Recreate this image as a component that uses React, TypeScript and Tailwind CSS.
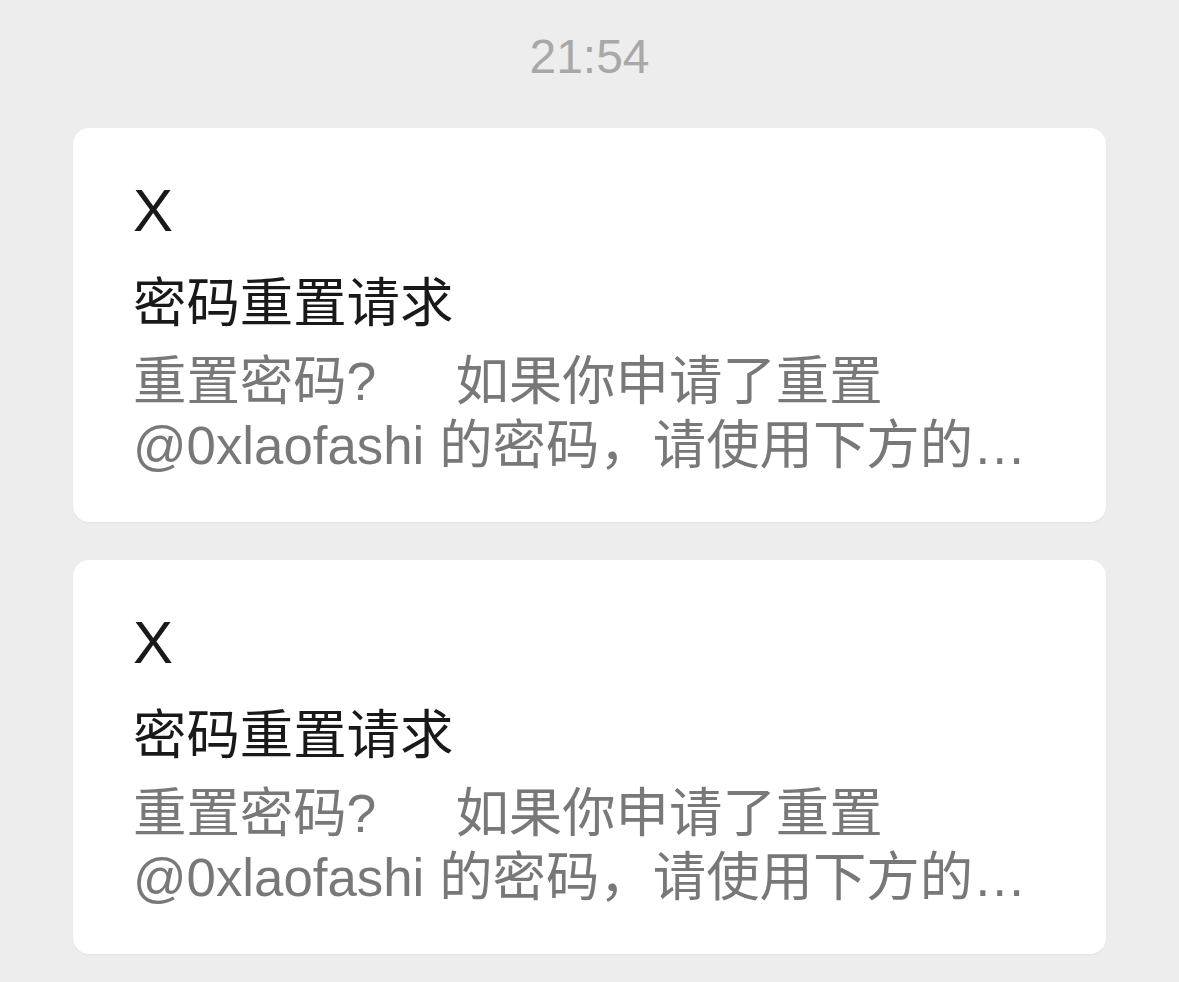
function MessageCard() {
  return (
    <div className="h-[394px] rounded-[16px] bg-white pl-[60px] pr-[70px] pt-[53px] shadow-[0_1px_2px_rgba(0,0,0,0.05)]">
      <div className="h-[60px] text-[60px] leading-[60px] text-[#191919]">X</div>
      <div className="mt-[33px] text-[53.4px] leading-[60px] text-[#191919]">密码重置请求</div>
      <div className="mt-[16px] text-[53.4px] leading-[64px] text-[#787878]">
        <div className="whitespace-pre">
          重置密码?     <span className="ml-[5px]">如果你申请了重置</span>
        </div>
        <div className="whitespace-nowrap">
          <span className="text-[52.8px]">@0xlaofashi</span> 的密码，请使用下方的…
        </div>
      </div>
    </div>
  )
}

export default function App() {
  return (
    <div className='min-h-[982px] overflow-hidden bg-[#ededed] px-[73px] [font-family:"Liberation_Sans","Noto_Sans_CJK_SC",sans-serif]'>
      <div className="flex h-[128px] items-start justify-center pt-[30px] text-[48px] leading-[54px] text-[#a8a8a8]">21:54</div>
      <div className="flex flex-col gap-[38px]">
        <MessageCard />
        <MessageCard />
      </div>
    </div>
  )
}
